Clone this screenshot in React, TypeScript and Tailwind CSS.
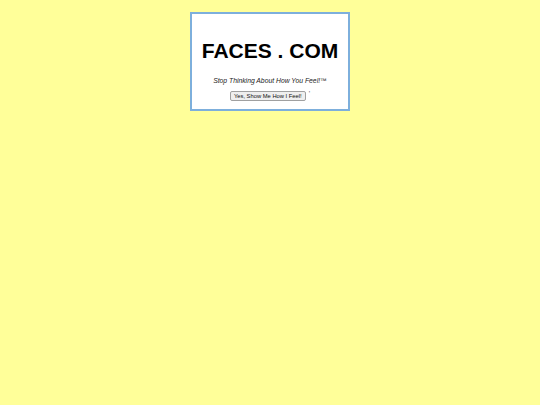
export default function App() {
  return (
    <div className="min-h-[405px] w-full bg-[#ffff99] pt-[12px]" style={{ fontFamily: '"Liberation Sans", Arial, sans-serif' }}>
      <div className="mx-auto flex h-[99px] w-[160px] flex-col items-center border-2 border-[#7dafdc] bg-white">
        <div className="mt-[25px] text-[21px] font-bold leading-[24px] text-black">FACES . COM</div>
        <div className="mt-[14px] text-[6.8px] italic leading-[8px] text-[#222]">Stop Thinking About How You Feel!™</div>
        <div className="mt-[6px] flex items-start">
          <button className="h-[10px] rounded-[2px] border border-[#a0a0a0] bg-[#efefef] px-[3px] text-[5.8px] leading-[8px] text-[#111]">Yes, Show Me How I Feel!</button>
          <span className="ml-[3px] text-[7px] leading-[5px] text-[#555]">'</span>
        </div>
      </div>
    </div>
  );
}
